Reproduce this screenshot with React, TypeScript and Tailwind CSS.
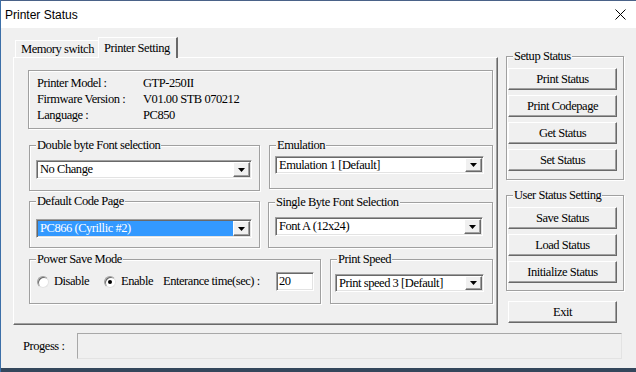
import React from "react";

const etched = "border border-[#a0a0a0] shadow-[inset_1px_1px_0_#fff,1px_1px_0_#fff]";
const sunken = "border border-[#a0a0a0] border-r-white border-b-white shadow-[inset_1px_1px_0_#696969,inset_-1px_-1px_0_#e3e3e3]";
const raised = "bg-[#f0f0f0] border border-white border-r-[#696969] border-b-[#696969] shadow-[inset_-1px_-1px_0_#a0a0a0]";

function Group({ label, className = "", children }: { label: string; className?: string; children?: React.ReactNode }) {
  return (
    <div className={`relative ${etched} ${className}`}>
      <span className="absolute left-[6px] -top-[8px] bg-[#f0f0f0] px-[1px] leading-[14px] whitespace-nowrap">{label}</span>
      {children}
    </div>
  );
}

function Arrow() {
  return (
    <div className={`w-[17px] h-full flex items-center justify-center ${raised}`}>
      <svg width="7" height="4" viewBox="0 0 7 4">
        <polygon points="0,0 7,0 3.5,4" fill="#000" />
      </svg>
    </div>
  );
}

function Combo({ value, selected = false, className = "" }: { value: string; selected?: boolean; className?: string }) {
  return (
    <div className={`flex bg-white p-[1px] ${sunken} ${className}`}>
      <div className={`flex-1 flex items-center pl-[2px] leading-none whitespace-nowrap ${selected ? "bg-[#3399ff] text-white" : ""}`}>
        {value}
      </div>
      <Arrow />
    </div>
  );
}

function Btn({ children, className = "" }: { children: React.ReactNode; className?: string }) {
  return (
    <div className={`h-[22px] w-[109px] flex items-center justify-center leading-none ${raised} ${className}`}>
      {children}
    </div>
  );
}

function Radio({ checked = false }: { checked?: boolean }) {
  return (
    <span className="w-[12px] h-[12px] rounded-full bg-white border border-[#a0a0a0] border-r-[#e3e3e3] border-b-[#e3e3e3] shadow-[inset_1px_1px_0_#696969] flex items-center justify-center">
      {checked && <span className="w-[4px] h-[4px] rounded-full bg-black" />}
    </span>
  );
}

const info = [
  ["Printer Model :", "GTP-250II"],
  ["Firmware Version :", "V01.00 STB 070212"],
  ["Language :", "PC850"],
];

export default function App() {
  return (
    <div className="w-[636px] h-[372px] bg-[#f0f0f0] flex flex-col overflow-hidden border-l border-[#3c6fa8] font-['Liberation_Serif',serif] text-[12.5px] tracking-[-0.45px] text-black">
      {/* title bar */}
      <div className="h-[1px] bg-[#4a6288]" />
      <div className="h-[27px] bg-white flex items-center justify-between pl-[4px] pr-[10px] font-['Liberation_Sans',sans-serif] tracking-normal">
        <span className="text-[12px]">Printer Status</span>
        <svg width="11" height="11" viewBox="0 0 11 11">
          <path d="M0.5 0.5 L10.5 10.5 M10.5 0.5 L0.5 10.5" stroke="#000" strokeWidth="1" />
        </svg>
      </div>

      <div className="flex h-[297px] pl-[12px]">
        {/* left: tabs */}
        <div className="w-[485px] flex flex-col">
          <div className="h-[29px] flex items-end pl-[2px]">
            <div className="w-[83px] h-[17px] border-t border-l border-white flex items-center pl-[5px] leading-none">
              Memory switch
            </div>
            <div className="relative z-10 -mb-[1px] w-[80px] h-[21px] bg-[#f0f0f0] border-t border-l border-white border-r-2 border-r-[#696969] pl-[5px] pt-[4px] leading-none">
              Printer Setting
            </div>
          </div>
          <div className="h-[268px] border-t border-l border-white border-r border-b border-r-[#696969] border-b-[#696969] shadow-[inset_-1px_-1px_0_#a0a0a0] pl-[14px] flex flex-col">
            <div className={`mt-[12px] w-[465px] h-[59px] pt-[4px] pl-[8px] ${etched}`}>
              {info.map(([k, v]) => (
                <div key={k} className="flex h-[16px] items-center">
                  <span className="w-[106px]">{k}</span>
                  <span>{v}</span>
                </div>
              ))}
            </div>

            <div className="flex items-start mt-[16px] ml-[1px]">
              <Group label="Double byte Font selection" className="w-[231px] h-[46px]">
                <Combo value="No Change" className="mt-[14px] ml-[6px] w-[216px] h-[19px]" />
              </Group>
              <Group label="Emulation" className="ml-[9px] w-[224px] h-[44px]">
                <Combo value="Emulation 1 [Default]" className="mt-[10px] ml-[5px] w-[209px] h-[18px]" />
              </Group>
            </div>

            <div className="flex items-start mt-[10px] ml-[1px]">
              <Group label="Default Code Page" className="w-[231px] h-[47px]">
                <Combo value="PC866 (Cyrillic #2)" selected className="mt-[17px] ml-[6px] w-[216px] h-[19px]" />
              </Group>
              <Group label="Single Byte Font Selection" className="ml-[8px] mt-[1px] w-[225px] h-[46px]">
                <Combo value="Font A (12x24)" className="mt-[14px] ml-[6px] w-[208px] h-[19px]" />
              </Group>
            </div>

            <div className="flex items-start mt-[11px] ml-[1px]">
              <Group label="Power Save Mode" className="w-[292px] h-[45px]">
                <div className="mt-[12px] ml-[7px] h-[19px] flex items-center">
                  <span className="w-[67px] flex items-center">
                    <Radio />
                    <span className="ml-[5px] leading-none">Disable</span>
                  </span>
                  <span className="w-[59px] flex items-center">
                    <Radio checked />
                    <span className="ml-[5px] leading-none">Enable</span>
                  </span>
                  <span className="w-[113px] leading-none whitespace-nowrap">Enterance time(sec) :</span>
                  <div className={`w-[38px] h-[19px] bg-white pl-[2px] flex items-center leading-none ${sunken}`}>20</div>
                </div>
              </Group>
              <Group label="Print Speed" className="ml-[9px] w-[163px] h-[45px]">
                <Combo value="Print speed 3 [Default]" className="mt-[14px] ml-[4px] w-[149px] h-[18px]" />
              </Group>
            </div>
          </div>
        </div>

        {/* right: buttons */}
        <div className="ml-[8px] w-[118px] flex flex-col">
          <Group label="Setup Status" className="mt-[28px] w-[118px] h-[124px]">
            <div className="mt-[11px] ml-[1px] flex flex-col gap-[5px]">
              <Btn>Print Status</Btn>
              <Btn>Print Codepage</Btn>
              <Btn>Get Status</Btn>
              <Btn>Set Status</Btn>
            </div>
          </Group>
          <Group label="User Status Setting" className="mt-[15px] w-[118px] h-[96px]">
            <div className="mt-[11px] ml-[1px] flex flex-col gap-[5px]">
              <Btn>Save Status</Btn>
              <Btn>Load Status</Btn>
              <Btn>Initialize Status</Btn>
            </div>
          </Group>
          <Btn className="mt-[10px] ml-[2px]">Exit</Btn>
        </div>
      </div>

      {/* progress */}
      <div className="mt-[8px] h-[26px] flex items-center pl-[22px]">
        <span className="w-[54px] leading-none">Progess :</span>
        <div className="w-[545px] h-[26px] border border-[#a8a8a8] border-r-[#e3e3e3] border-b-[#e3e3e3]" />
      </div>

      <div className="flex-1" />
      <div className="h-[4px] bg-[#34475c]" />
    </div>
  );
}
